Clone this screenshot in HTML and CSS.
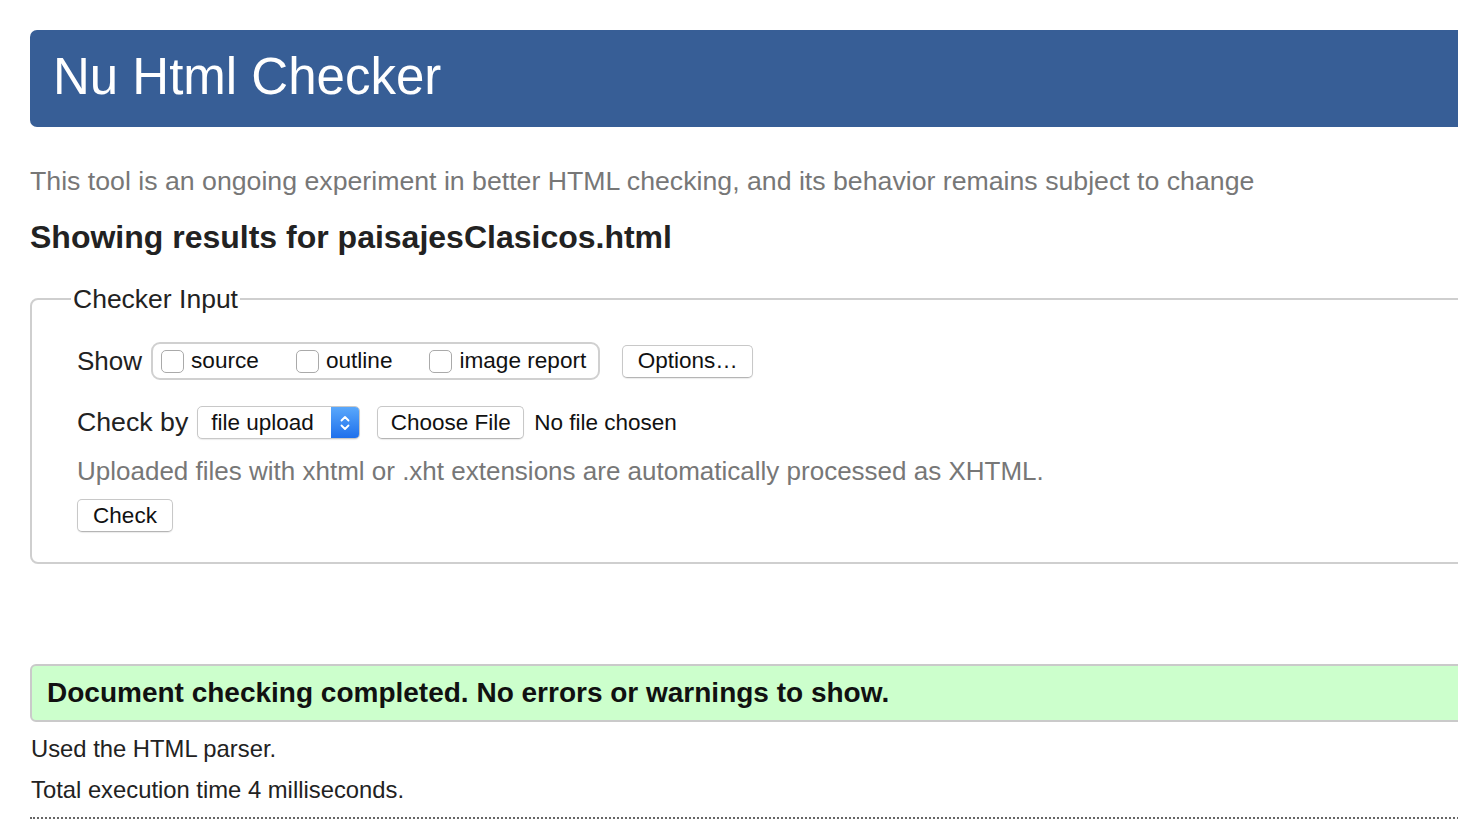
FILE: index.html
```html
<!DOCTYPE html>
<html lang="en">
<head>
<meta charset="utf-8">
<title>Nu Html Checker</title>
<link rel="stylesheet" href="styles.css">
</head>
<body>
<div class="page">
  <header class="banner"><h1 class="title">Nu Html Checker</h1></header>
  <p class="intro">This tool is an ongoing experiment in better HTML checking, and its behavior remains subject to change</p>
  <h2 class="results-title">Showing results for paisajesClasicos.html</h2>
  <fieldset class="checker">
    <legend class="checker-legend">Checker Input</legend>
    <div class="row row-show">
      <span class="row-label">Show</span>
      <div class="check-group">
        <label class="opt"><span class="box"></span>source</label>
        <label class="opt"><span class="box"></span>outline</label>
        <label class="opt"><span class="box"></span>image report</label>
      </div>
      <span class="btn btn-options">Options…</span>
    </div>
    <div class="row row-by">
      <span class="row-label">Check by</span>
      <span class="select"><span class="select-text">file upload</span><span class="select-arrows"><svg width="12" height="20" viewBox="0 0 12 20"><path d="M2.5 7.5 L6 4 L9.5 7.5" fill="none" stroke="#fff" stroke-width="1.8" stroke-linecap="round" stroke-linejoin="round"/><path d="M2.5 12.5 L6 16 L9.5 12.5" fill="none" stroke="#fff" stroke-width="1.8" stroke-linecap="round" stroke-linejoin="round"/></svg></span></span>
      <span class="btn btn-file">Choose File</span>
      <span class="no-file">No file chosen</span>
    </div>
    <p class="note">Uploaded files with xhtml or .xht extensions are automatically processed as XHTML.</p>
    <span class="btn btn-check">Check</span>
  </fieldset>
  <div class="success">Document checking completed. No errors or warnings to show.</div>
  <p class="stat">Used the HTML parser.</p>
  <p class="stat stat-last">Total execution time 4 milliseconds.</p>
  <div class="rule"></div>
</div>
</body>
</html>
```
FILE: styles.css
```css
html, body {
  margin: 0;
  padding: 0;
  overflow: hidden;
  background: #fff;
}
body {
  font-family: "Liberation Sans", Arial, Helvetica, sans-serif;
  color: #222;
}
.page {
  padding: 30px 0 0 30px;
  width: 1500px;
}
.banner {
  height: 97px;
  background: #375e96;
  border-radius: 7px 0 0 7px;
  display: flex;
  align-items: center;
  padding-left: 23px;
}
.title {
  margin: 0;
  color: #fff;
  font-weight: normal;
  font-size: 51px;
  line-height: 1;
  position: relative;
  top: -2px;
}
.intro {
  margin: 40px 0 0 0;
  font-size: 26.7px;
  line-height: 29px;
  color: #777;
}
.results-title {
  margin: 22px 0 0 0;
  font-size: 32px;
  line-height: 38px;
  font-weight: bold;
  color: #222;
}
.checker {
  margin: 28px 0 0 0;
  border: 2px solid #cfcfcf;
  border-radius: 8px 0 0 8px;
  padding: 0 0 30px 45px;
}
.checker-legend {
  margin-left: -6px;
  padding: 0 2px;
  font-size: 26.5px;
  line-height: 30px;
  color: #222;
}
.row {
  display: flex;
  align-items: center;
}
.row-show {
  margin-top: 28px;
  height: 38px;
}
.row-by {
  margin-top: 26px;
  height: 33px;
}
.row-label {
  font-size: 26px;
  color: #222;
  margin-right: 9px;
}
.row-by .row-label {
  font-size: 26.7px;
}
.check-group {
  display: flex;
  align-items: center;
  height: 34px;
  border: 2px solid #d0d0d0;
  border-radius: 9px;
  padding: 0 12px 0 8px;
  gap: 37px;
}
.opt {
  display: flex;
  align-items: center;
  font-size: 22.6px;
  color: #111;
}
.box {
  border: 1px solid #aaa;
  border-radius: 5px;
  background: #fff;
  margin-right: 7px;
  box-sizing: border-box;
  width: 23px;
  height: 23px;
}
.btn {
  display: inline-flex;
  align-items: center;
  justify-content: center;
  box-sizing: border-box;
  height: 33px;
  border: 1px solid #c8c8c8;
  border-bottom-color: #b5b5b5;
  border-radius: 5px;
  background: #fff;
  font-size: 22.5px;
  color: #111;
  box-shadow: 0 1px 1px rgba(0,0,0,0.08);
}
.btn-options {
  margin-left: 22px;
  width: 131px;
}
.select {
  display: inline-flex;
  box-sizing: border-box;
  height: 33px;
  width: 163px;
  border: 1px solid #c8c8c8;
  border-radius: 5px;
  overflow: hidden;
  background: #fff;
  box-shadow: 0 1px 1px rgba(0,0,0,0.08);
}
.select-text {
  flex: 1;
  display: flex;
  align-items: center;
  padding-left: 13px;
  font-size: 22.5px;
  color: #111;
}
.select-arrows {
  width: 28px;
  display: flex;
  align-items: center;
  justify-content: center;
  background: linear-gradient(#5aa8fb, #1f70ec);
}
.btn-file {
  margin-left: 17px;
  width: 147px;
}
.no-file {
  margin-left: 10px;
  font-size: 22.5px;
  color: #111;
}
.note {
  margin: 18px 0 0 0;
  font-size: 26px;
  line-height: 29px;
  color: #777;
}
.btn-check {
  margin-top: 13px;
  width: 96px;
}
.success {
  margin-top: 100px;
  box-sizing: border-box;
  height: 58px;
  background: #ccffcc;
  border: 2px solid #cacaca;
  border-radius: 6px 0 0 6px;
  padding-left: 15px;
  display: flex;
  align-items: center;
  font-weight: bold;
  font-size: 28px;
  color: #111;
}
.stat {
  margin: 0;
  font-size: 23.8px;
  line-height: 41px;
  color: #222;
  padding-left: 1px;
}
.success + .stat {
  margin-top: 6px;
}
.rule {
  margin-top: 7px;
  border-top: 2px dotted #666;
}
```
